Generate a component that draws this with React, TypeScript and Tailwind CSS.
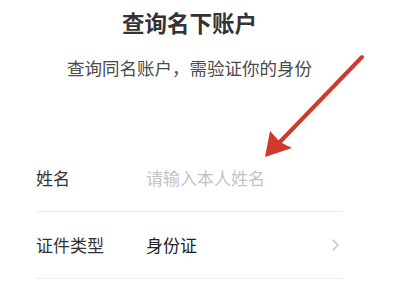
const font = {
  fontFamily: '"Noto Sans CJK SC", "Noto Sans", sans-serif',
};

function Row({
  label,
  value,
  placeholder,
  chevron,
}: {
  label: string;
  value?: string;
  placeholder?: string;
  chevron?: boolean;
}) {
  return (
    <div className="flex h-[67px] items-center border-b border-[#ededed]">
      <span className="w-[110px] text-[17px] text-[#333]">{label}</span>
      <span
        className={`flex-1 text-[17px] ${
          placeholder ? "text-[#c4c4c4]" : "text-[#222]"
        }`}
      >
        {value ?? placeholder}
      </span>
      {chevron && (
        <svg width="10" height="14" viewBox="0 0 10 14" className="mr-[2px]">
          <path
            d="M2 2l5 5-5 5"
            fill="none"
            stroke="#c8c8c8"
            strokeWidth="1.6"
            strokeLinecap="round"
            strokeLinejoin="round"
          />
        </svg>
      )}
    </div>
  );
}

export default function App() {
  return (
    <div className="relative h-[300px] w-[400px] overflow-hidden bg-white" style={font}>
      <div className="w-[379px] px-[36px]">
        <div className="pt-[7px] text-center text-[22.5px] font-bold leading-[30px] text-[#333]">
          查询名下账户
        </div>
        <div className="mt-[19px] text-center text-[17.5px] leading-[24px] text-[#4a4a4a]">
          查询同名账户，需验证你的身份
        </div>

        <div className="mt-[65px]">
          <Row label="姓名" placeholder="请输入本人姓名" />
          <Row label="证件类型" value="身份证" chevron />
        </div>
      </div>

      {/* annotation arrow */}
      <svg
        className="pointer-events-none absolute left-0 top-0"
        width="400"
        height="300"
        viewBox="0 0 400 300"
      >
        <line
          x1="362"
          y1="57"
          x2="276"
          y2="146"
          stroke="#cf3a2c"
          strokeWidth="4"
          strokeLinecap="round"
        />
        <path d="M265 157 L270 131 L280 142 L292 148 Z" fill="#cf3a2c" />
      </svg>
    </div>
  );
}
